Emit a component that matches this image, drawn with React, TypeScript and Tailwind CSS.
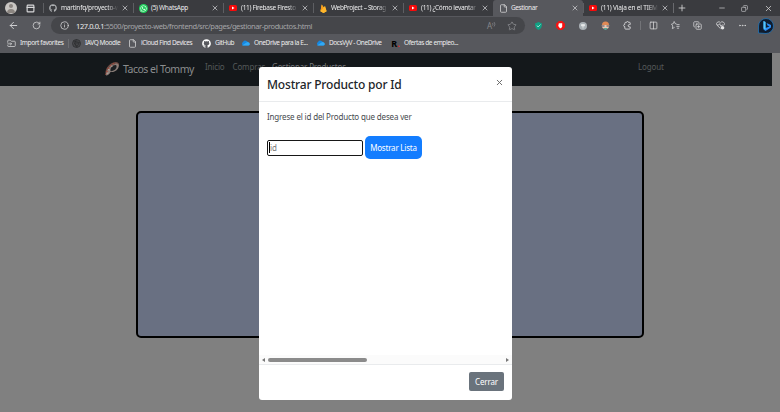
import React from "react";
import {
  ArrowLeft, RotateCw, Info, File, X, Plus, Minus, Copy, Star, Columns2,
  Ellipsis, FolderInput, CopyPlus, PanelTop,
} from "lucide-react";
import { FaGithub, FaWhatsapp } from "react-icons/fa";

const YouTube = () => (
  <svg viewBox="0 0 16 12" className="h-[6px] w-[8px]">
    <rect width="16" height="12" rx="3" fill="#f60b0b" />
    <path d="M6 3l5 3-5 3z" fill="#fff" />
  </svg>
);

const Firebase = () => (
  <svg viewBox="0 0 16 20" className="h-[9px] w-[7px]">
    <path d="M1 16L4 1l4 6 2-3 5 12-7 4z" fill="#ffc52e" />
    <path d="M1 16L4 1l5 8z" fill="#f79a1c" />
    <path d="M1 16L12 5l3 11-7 4z" fill="#ffb52a" />
  </svg>
);

const WhatsApp = () => (
  <span className="flex size-[9px] items-center justify-center rounded-full bg-[#21cf5c]">
    <FaWhatsapp size={7} color="#fff" />
  </span>
);

const Cloud = () => (
  <svg viewBox="0 0 18 12" className="h-[6px] w-[9px]">
    <path d="M4 11a4 4 0 0 1 0-7 5.500 5.500 0 0 1 10 1 3 3 0 0 1 0 6z" fill="#1687e0" />
    <path d="M2 11l9-6a4 4 0 0 1 6 5l-2 1z" fill="#31a9f5" />
  </svg>
);

const Globe = () => (
  <svg viewBox="0 0 18 18" className="size-[9px]" fill="none" stroke="#2d2e31" strokeWidth="1.6">
    <circle cx="9" cy="9" r="8" fill="#47484b" />
    <path d="M3 4l12 3-5 8-5-7h9M9 1l-4 8 5 8" />
  </svg>
);

const Bing = () => (
  <svg viewBox="0 0 32 32" className="size-[16px]">
    <path d="M1 30V16a15 15 0 1 1 15 15z" fill="#101c2d" stroke="#2278bd" strokeWidth="1.500" />
    <path d="M11 6l4 2v12l8-3-4-2-2-5 9 4v5l-11 7-4-3z" fill="#2a8cf5" />
    <path d="M11 6l4 2v15l-4-2z" fill="#54c7fa" />
  </svg>
);

const Taco = () => (
  <svg viewBox="0 0 32 32" className="size-[16px]">
    <path d="M3 28C1 17 10 3 23 2c5 0 8 3 7 7L18 18z" fill="#6f4b43" />
    <path d="M4 29C4 18 12 8 24 5c6 0 7 5 4 10-4 6-11 8-15 7-2 4-5 7-9 7z" fill="#8a7d78" />
    <path d="M13 20c-1-6 4-12 10-12 4 1 2 7-2 10-3 2-6 3-8 2z" fill="#1c2023" />
    <path d="M3 27l3-3M4 20l4 2M7 14l4 2M12 8l3 3M18 4l2 3" stroke="#a4473a" strokeWidth="2" />
    <path d="M5 25l4-1M8 17l4 1M14 10l3 1" stroke="#c2b7ad" strokeWidth="1.500" />
  </svg>
);

const FavoritesStar = () => (
  <svg viewBox="0 0 20 20" className="size-[9px]" fill="none" stroke="currentColor" strokeWidth="1.700">
    <path d="M12 6H9.500L7 1 5 6 1 7l3 4-1 6 5-3M12 8h7M12 12h7M13 16h5" />
  </svg>
);

const Extensions = () => (
  <svg viewBox="0 0 20 20" className="size-[9px]" fill="none" stroke="currentColor" strokeWidth="2">
    <path d="M16 7V4.500a1.500 1.500 0 0 0-1.500-1.500H12a2 2 0 0 0-4 0H6a2 2 0 0 0-2 2v2.500a2.500 2.500 0 0 0 0 5V16a2 2 0 0 0 2 2h8.500a1.500 1.500 0 0 0 1.500-1.500V13h-2a2.500 2.500 0 0 1 0-5h2z" />
  </svg>
);

const Essentials = () => (
  <svg viewBox="0 0 20 20" className="size-[9px]" fill="none" stroke="currentColor" strokeWidth="1.800">
    <path d="M10 17L2 9a4.500 4.500 0 0 1 8-5 4.500 4.500 0 0 1 8 5l-1 1M2 9h4l2-3 3 6 2-3h3" />
    <circle cx="14.500" cy="15" r="4" fill="#e4e4e5" stroke="none" />
  </svg>
);

const ReadAloud = () => (
  <span className="relative w-[9px] shrink-0 text-[8px] leading-none text-[#85868b]">
    A
    <svg viewBox="0 0 8 10" className="absolute left-[5px] top-0 h-[5px] w-[4px]" fill="none" stroke="currentColor" strokeWidth="1.500">
      <path d="M1 2q2 2 0 5M4 0q4 4 0 9" />
    </svg>
  </span>
);

const Face = () => (
  <svg viewBox="0 0 18 18" className="size-[9px]">
    <circle cx="9" cy="8" r="7" fill="#e08a55" />
    <path d="M2 8h14l-1 6-6 3-6-3z" fill="#e9c8b4" />
    <path d="M1 8h6v4H2zM11 8h6l-1 4h-5z" fill="#9c8c8a" />
    <path d="M6 14h6v3H6z" fill="#52aa9c" />
  </svg>
);

type TabProps = { icon: React.ReactNode; label: string; text: string; active?: boolean; fade?: boolean };

const Tab = ({ icon, label, text, active, fade }: TabProps) => (
  <div
    className={`flex h-[16px] w-[90px] shrink-0 items-center ${
      active ? "rounded-t-[3px] bg-[#57585d]" : ""
    }`}
  >
    <span className={`h-[10px] w-px shrink-0 ${active ? "" : "bg-[#5d5e62]"}`} />
    <span className="ml-[3px] flex w-[12px] shrink-0 justify-center">{icon}</span>
    <span
      className={`ml-[2px] w-[57px] shrink-0 whitespace-nowrap text-[6.500px] leading-[12px] text-[#ececed] ${text} ${
        fade ? "[mask-image:linear-gradient(to_right,black_82%,transparent)]" : ""
      }`}
    >
      {label}
    </span>
    <X className="ml-[3px] size-[8px] shrink-0 text-[#dddddf]" strokeWidth={2} />
  </div>
);

type BookmarkProps = { icon: React.ReactNode; label: string; box: string; text: string };

const Bookmark = ({ icon, label, box, text }: BookmarkProps) => (
  <div className={`flex shrink-0 items-center ${box}`}>
    <span className="flex w-[11px] shrink-0 justify-center">{icon}</span>
    <span className={`ml-[3px] whitespace-nowrap text-[6.500px] leading-[12px] text-[#ececed] ${text}`}>{label}</span>
  </div>
);

const Tool = ({ children }: { children: React.ReactNode }) => (
  <span className="flex w-[22.400px] shrink-0 items-center justify-center">{children}</span>
);

const Browser = () => (
  <header className="bg-[#57585d] text-[#d8d8da]">
    <div className="flex h-[16px] items-center bg-[#3a3b3f]">
      <span className="ml-[5px] flex size-[12px] shrink-0 flex-col items-center overflow-hidden rounded-full bg-[#c9c6c3] pt-[2px]">
        <span className="size-[4px] shrink-0 rounded-full bg-[#8b8580]" />
        <span className="mt-[1px] h-[4px] w-[8px] shrink-0 rounded-t-full bg-[#8b8580]" />
      </span>
      <PanelTop className="ml-[9px] mr-[8px] size-[9px] shrink-0" strokeWidth={3} />
      <Tab fade icon={<FaGithub size={8} color="#aeb0b3" />} label="martinfq/proyecto-w" text="tracking-[-0.22px]" />
      <Tab icon={<WhatsApp />} label="(5) WhatsApp" text="tracking-[-0.3px]" />
      <Tab fade icon={<YouTube />} label="(11) Firebase Firesto" text="tracking-[-0.3px]" />
      <Tab fade icon={<Firebase />} label="WebProject – Storag" text="tracking-[-0.35px]" />
      <Tab fade icon={<YouTube />} label="(11) ¿Cómo levantar" text="tracking-[-0.3px]" />
      <Tab active icon={<File size={9} />} label="Gestionar" text="tracking-[-0.4px]" />
      <Tab fade icon={<YouTube />} label="(11) Viaja en el TIEM" text="tracking-[-0.2px]" />
      <span className="h-[10px] w-px shrink-0 bg-[#696a6e]" />
      <Plus className="ml-[3px] size-[10px] shrink-0" strokeWidth={2} />
      <Minus className="ml-[31px] size-[8px] shrink-0" />
      <Copy className="ml-[15px] size-[7px] shrink-0 -scale-x-100" />
      <X className="ml-[16px] size-[9px] shrink-0" />
    </div>
    <div className="flex h-[19px] items-center">
      <ArrowLeft className="ml-[8px] size-[11px] shrink-0" />
      <RotateCw className="ml-[13px] size-[9px] shrink-0" />
      <div className="ml-[10px] flex h-[17px] w-[474px] shrink-0 items-center rounded-full bg-[#45464a]">
        <Info className="ml-[9px] size-[9px] shrink-0" />
        <span className="ml-[7px] w-[240px] shrink-0 whitespace-nowrap text-[7.500px] leading-[12px] tracking-[-0.41px] text-[#a4a5a8]">
          <span className="text-[#ececed]">127.0.0.1</span>
          :5500/proyecto-web/frontend/src/pages/gestionar-productos.html
        </span>
        <span className="ml-[171px] flex shrink-0"><ReadAloud /></span>
        <Star className="ml-[11px] size-[10px] shrink-0 text-[#88898d]" />
      </div>
      <span className="w-[2px] shrink-0" />
      <Tool>
        <svg viewBox="0 0 14 16" className="h-[8px] w-[7px]">
          <path d="M7 0l7 3c0 7-2 11-7 13C2 14 0 10 0 3z" fill="#10a184" />
          <path d="M4 7l2 3 5-5" fill="none" stroke="#c8efe5" strokeWidth="1.500" />
        </svg>
      </Tool>
      <Tool>
        <svg viewBox="0 0 16 16" className="size-[9px]">
          <path d="M5 0h6l5 5v6l-5 5H5l-5-5V5z" fill="#f51313" />
          <path d="M5 4h6v6l-2 3H7l-3-4z" fill="#fff" />
        </svg>
      </Tool>
      <Tool>
        <svg viewBox="0 0 16 16" className="size-[8px]">
          <circle cx="8" cy="8" r="8" fill="#a9b0b5" />
          <path d="M8 13V7M5 5h6v3H5z" fill="#e5e8e9" stroke="#e5e8e9" strokeWidth="1.500" />
        </svg>
      </Tool>
      <Tool><Face /></Tool>
      <Tool><Extensions /></Tool>
      <span className="mx-px h-[9px] w-px shrink-0 bg-[#737478]" />
      <Tool><Columns2 size={9} /></Tool>
      <Tool><FavoritesStar /></Tool>
      <Tool><CopyPlus size={9} /></Tool>
      <Tool><Essentials /></Tool>
      <Tool><Ellipsis size={9} /></Tool>
      <span className="ml-[4px] mt-[1px] shrink-0"><Bing /></span>
    </div>
    <div className="flex h-[18px] items-center pb-[2px]">
      <Bookmark icon={<FolderInput size={9} />} label="Import favorites" box="ml-[6px] w-[62px]" text="tracking-[-0.38px]" />
      <span className="h-[9px] w-px shrink-0 bg-[#6b6c70]" />
      <Bookmark icon={<Globe />} label="IAVQ Moodle" box="ml-[2px] w-[56px]" text="tracking-[-0.42px]" />
      <Bookmark icon={<File size={9} />} label="iCloud Find Devices" box="w-[74px]" text="tracking-[-0.41px]" />
      <Bookmark icon={<FaGithub size={9} color="#fff" />} label="GitHub" box="w-[39px]" text="tracking-[-0.4px]" />
      <Bookmark icon={<Cloud />} label="OneDrive para la E..." box="w-[75px]" text="tracking-[-0.4px]" />
      <Bookmark icon={<Cloud />} label="DocsVyV - OneDrive" box="w-[75px]" text="tracking-[-0.43px]" />
      <Bookmark
        icon={<span className="text-[9px] font-bold leading-none text-black">R<span className="text-[#e02323]">.</span></span>}
        label="Ofertas de empleo..."
        box="w-[75px]"
        text="tracking-[-0.4px]"
      />
    </div>
  </header>
);

const Navbar = () => (
  <nav className="flex h-[33px] w-[772px] bg-[#14181b] pt-[8px] text-[8px] leading-[12px] tracking-[-0.16px] text-[#55585a]">
    <span className="ml-[104px]"><Taco /></span>
    <span className="ml-[3px] mt-px w-[82px] whitespace-nowrap text-[10.500px] leading-[14px] tracking-[-0.5px] text-[#8b8d8e]">
      Tacos el Tommy
    </span>
    <span className="w-[27.500px]">Inicio</span>
    <span className="w-[39.500px]">Compras</span>
    <span className="w-[366px] whitespace-nowrap text-[#77797b]">Gestionar Productos</span>
    <span>Logout</span>
  </nav>
);

const Modal = () => (
  <section className="absolute left-[259px] top-[67px] flex h-[333px] w-[253px] flex-col rounded-[3px] bg-white py-px text-[#212529]">
    <div className="flex h-[34px] shrink-0 justify-between border-b border-[#e9ebed] pl-[8px] pr-[8px]">
      <h1 className="mt-[8px] whitespace-nowrap text-[12px] font-medium leading-[18px] tracking-[-0.18px]">
        Mostrar Producto por Id
      </h1>
      <X className="mt-[10px] size-[9px] text-[#666]" strokeWidth={2.5} />
    </div>
    <div className="flex min-h-0 flex-1 flex-col">
      <p className="ml-[8px] mt-[9px] whitespace-nowrap text-[8px] leading-[12px] tracking-[-0.16px] text-[#45494e]">
        Ingrese el id del Producto que desea ver
      </p>
      <div className="ml-[8px] mt-[13px] flex items-center gap-[2px]">
        <div className="flex h-[16px] w-[96px] items-center rounded-[2px] border-[1.500px] border-[#171717] pl-px">
          <span className="h-[11px] w-px bg-black" />
          <span className="text-[8px] leading-[12px] text-[#777]">id</span>
        </div>
        <button className="h-[23px] w-[57px] whitespace-nowrap rounded-[5px] bg-[#137dff] text-[8px] leading-[12px] tracking-[-0.2px] text-white">
          Mostrar Lista
        </button>
      </div>
      <div className="mt-auto flex h-[9px] items-center bg-[#fbfbfb] px-[3px]">
        <span className="border-y-[2.500px] border-r-[3px] border-y-transparent border-r-[#777]" />
        <span className="ml-[3px] h-[4px] w-[99px] rounded-full bg-[#8b8b8b]" />
        <span className="ml-auto border-y-[2.500px] border-l-[3px] border-y-transparent border-l-[#777]" />
      </div>
    </div>
    <div className="flex h-[35px] shrink-0 justify-end border-t border-[#e9ebed] pr-[8px] pt-[7px]">
      <button className="h-[19px] w-[35px] rounded-[2px] bg-[#6a737c] text-[8px] leading-[12px] tracking-[-0.16px] text-white">
        Cerrar
      </button>
    </div>
  </section>
);

export default function App() {
  return (
    <div className="relative h-[412px] w-[780px] overflow-hidden bg-[#808080] font-['Noto_Sans','Open_Sans',sans-serif]">
      <Browser />
      <Navbar />
      <main className="ml-[136px] mt-[25px] h-[227px] w-[508px] rounded-[5px] border-[2px] border-black bg-[#697082]" />
      <Modal />
    </div>
  );
}
